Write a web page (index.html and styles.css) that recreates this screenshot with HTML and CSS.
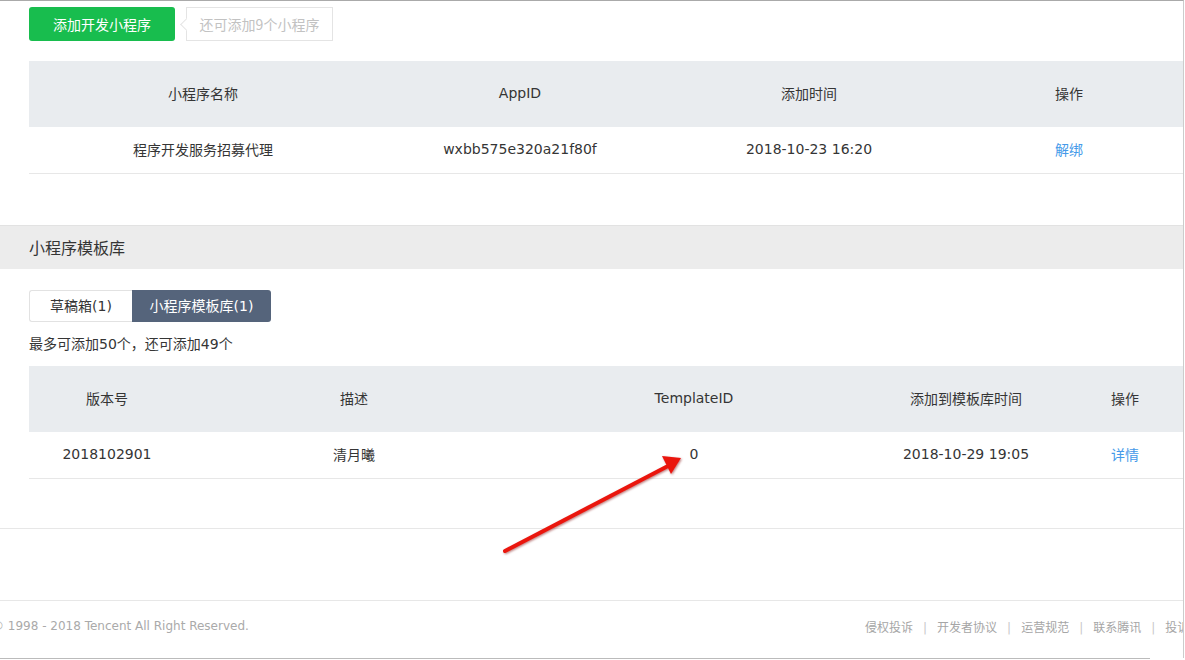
FILE: index.html
```html
<!DOCTYPE html>
<html lang="zh-CN">
<head>
    <meta charset="UTF-8">
    <title>小程序管理</title>
    <link rel="stylesheet" href="styles.css">
</head>
<body>

    <div class="page">

        <div class="toolbar">
            <a class="btn-green" href="#">添加开发小程序</a>
            <span class="tip">还可添加9个小程序</span>
        </div>

        <div class="table table-apps">
            <div class="thead">
                <div>小程序名称</div>
                <div>AppID</div>
                <div>添加时间</div>
                <div>操作</div>
            </div>
            <div class="trow">
                <div>程序开发服务招募代理</div>
                <div>wxbb575e320a21f80f</div>
                <div>2018-10-23 16:20</div>
                <div><a href="#" class="link">解绑</a></div>
            </div>
        </div>

        <div class="section-head">小程序模板库</div>

        <div class="tabs">
            <span class="tab">草稿箱(1)</span>
            <span class="tab active">小程序模板库(1)</span>
        </div>

        <p class="note">最多可添加50个，还可添加49个</p>

        <div class="table table-tpl">
            <div class="thead">
                <div>版本号</div>
                <div>描述</div>
                <div>TemplateID</div>
                <div>添加到模板库时间</div>
                <div>操作</div>
            </div>
            <div class="trow">
                <div>2018102901</div>
                <div>清月曦</div>
                <div>0</div>
                <div>2018-10-29 19:05</div>
                <div><a href="#" class="link">详情</a></div>
            </div>
        </div>

        <div class="divider"></div>

        <footer>
            <span class="copy">&copy; 1998 - 2018 Tencent All Right Reserved.</span>
            <span class="links">
                <a href="#">侵权投诉</a><i>|</i><a href="#">开发者协议</a><i>|</i><a href="#">运营规范</a><i>|</i><a href="#">联系腾讯</a><i>|</i><a href="#">投诉指引</a>
            </span>
        </footer>

        <!-- annotation arrow drawn over the screenshot -->
        <svg class="arrow" width="1185" height="660" viewBox="0 0 1185 660">
            <defs>
                <filter id="sh" x="-10%" y="-10%" width="120%" height="120%">
                    <feDropShadow dx="1" dy="1" stdDeviation="0.8" flood-color="#7a0000" flood-opacity="0.5"/>
                </filter>
            </defs>
            <g filter="url(#sh)">
                <line x1="505" y1="551" x2="668" y2="466" stroke="#ea1510" stroke-width="4" stroke-linecap="round"/>
                <polygon points="681,458 662,456 671,474" fill="#ea1510"/>
            </g>
        </svg>
    </div>

    <div class="page-bottom"></div>

</body>
</html>
```

FILE: styles.css
```css
/* General */
body {
    margin: 0;
    background: #fff;
    font-family: "DejaVu Sans", "Noto Sans CJK SC", sans-serif;
    font-size: 14px;
    color: #353535;
    overflow: hidden;
}

a {
    text-decoration: none;
}

.page {
    position: relative;
    width: 1183px;
    height: 657px;
    border-top: 1px solid #aaa;
    border-right: 1px solid #ccc;
    overflow: hidden;
}

/* Toolbar */
.toolbar {
    display: flex;
    align-items: center;
    padding: 6px 0 0 29px;
    height: 34px;
}

.btn-green {
    display: inline-flex;
    align-items: center;
    justify-content: center;
    box-sizing: border-box;
    width: 146px;
    height: 34px;
    padding-bottom: 1px;
    background: #18bd4e;
    color: #fff;
    border-radius: 3px;
    font-family: "Noto Sans CJK SC", sans-serif;
}

.tip {
    position: relative;
    box-sizing: border-box;
    display: inline-flex;
    align-items: center;
    justify-content: center;
    width: 147px;
    height: 34px;
    margin-left: 11px;
    padding-bottom: 1px;
    border: 1px solid #e4e4e4;
    color: #c2c2c2;
    font-family: "Noto Sans CJK SC", sans-serif;
}

.tip::before {
    content: "";
    position: absolute;
    left: -5px;
    top: 12px;
    width: 8px;
    height: 8px;
    background: #fff;
    border-left: 1px solid #e4e4e4;
    border-bottom: 1px solid #e4e4e4;
    transform: rotate(45deg);
}

/* Tables */
.table {
    margin-left: 29px;
}

.table-apps {
    margin-top: 20px;
}

.thead,
.trow {
    display: grid;
    box-sizing: border-box;
    align-items: center;
    text-align: center;
}

.table-apps .thead,
.table-apps .trow {
    grid-template-columns: 348px 286px 292px 228px;
}

.table-tpl .thead,
.table-tpl .trow {
    grid-template-columns: 156px 338px 342px 202px 116px;
}

.thead {
    height: 66px;
    padding-bottom: 2px;
    background: #e9ecef;
}

.trow {
    height: 47px;
    padding-bottom: 3px;
    border-bottom: 1px solid #e7e7e7;
}

.link {
    color: #459ae9;
}

/* Template section */
.section-head {
    margin-top: 51px;
    height: 43px;
    line-height: 42px;
    padding-left: 29px;
    background: #ececec;
    border-top: 1px solid #e2e2e2;
    font-size: 16px;
    font-family: "Noto Sans CJK SC", sans-serif;
}

.tabs {
    display: flex;
    margin: 21px 0 0 29px;
    height: 32px;
}

.tab {
    display: inline-flex;
    align-items: center;
    justify-content: center;
    box-sizing: border-box;
    height: 32px;
    padding-bottom: 2px;
}

.tab:first-child {
    width: 103px;
    border: 1px solid #e2e2e2;
    border-right: none;
    border-radius: 3px 0 0 3px;
}

.tab.active {
    width: 139px;
    background: #55647b;
    color: #fff;
    border-radius: 0 3px 3px 0;
}

.note {
    margin: 12px 0 0 29px;
    line-height: 20px;
    padding-bottom: 1px;
}

.table-tpl {
    margin-top: 11px;
}

.divider {
    margin-top: 49px;
    border-top: 1px solid #e7e7e7;
}

/* Footer */
footer {
    display: flex;
    align-items: center;
    box-sizing: border-box;
    margin-top: 71px;
    height: 57px;
    padding-bottom: 6px;
    border-top: 1px solid #e7e7e7;
    font-size: 12px;
    color: #aaa;
    white-space: nowrap;
}

.copy {
    width: 873px;
    margin-left: -8px;
    flex-shrink: 0;
}

.links a {
    color: #a6a6a6;
    font-family: "Noto Sans CJK SC", sans-serif;
}

.links i {
    font-style: normal;
    color: #c8c8c8;
    margin: 0 10px;
}

.page-bottom {
    width: 1150px;
    border-top: 1px solid #bbb;
}

.arrow {
    position: absolute;
    left: 0;
    top: -1px;
    pointer-events: none;
}
```
